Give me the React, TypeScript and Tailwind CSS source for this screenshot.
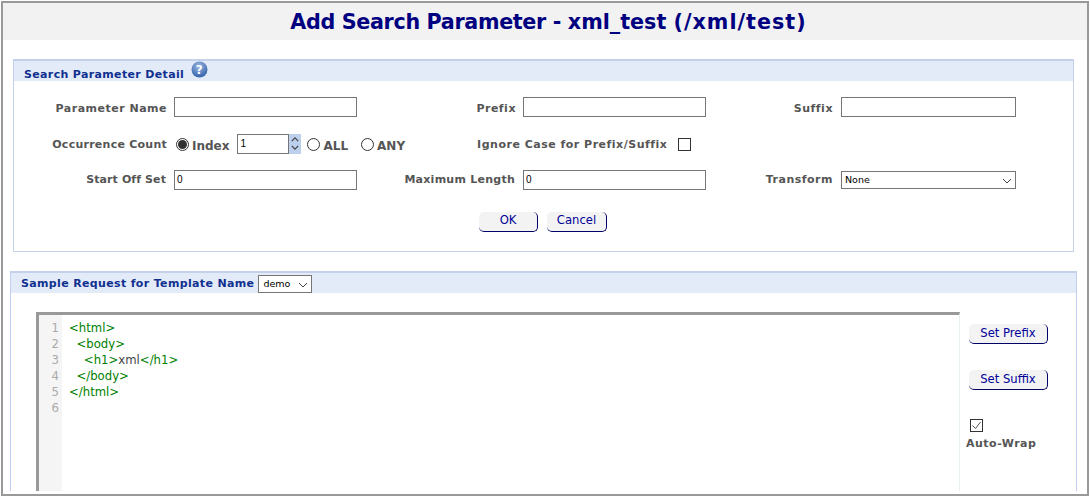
import React from "react";

const labelCls = "pt-[4px] text-right text-[11px] font-bold text-[#555555] whitespace-nowrap tracking-[0.5px]";
const inputCls = "h-5 border border-[#767676] bg-white px-[2px] text-[10px] text-black outline-none font-['Liberation_Sans',sans-serif]";

function Radio({ checked }: { checked?: boolean }) {
    return (
        <span className="mt-[2px] flex h-[13px] w-[13px] shrink-0 items-center justify-center rounded-full border border-[#333333] bg-white">
            {checked && <span className="h-[9px] w-[9px] rounded-full bg-[#333333]" />}
        </span>
    );
}

function Btn({ label, width }: { label: string; width: string }) {
    return (
        <button className={`${width} h-5 rounded-[5px] border-r border-b border-r-[#000066] border-b-[#000066] bg-[#f3f3f3] text-[11.6px] text-[#000099]`}>
            {label}
        </button>
    );
}

function HelpIcon() {
    return (
        <svg width="17" height="17" viewBox="0 0 17 17" className="ml-[7px] mt-[-4px]">
            <defs>
                <radialGradient id="help" cx="45%" cy="30%" r="75%">
                    <stop offset="0%" stopColor="#9db8e0" />
                    <stop offset="100%" stopColor="#2c5ca8" />
                </radialGradient>
            </defs>
            <circle cx="8.5" cy="8.5" r="8" fill="url(#help)" />
            <text x="8.5" y="13" textAnchor="middle" fontSize="12" fontWeight="700" fill="#ffffff">?</text>
        </svg>
    );
}

const codeLines = ["<html>", "  <body>", "    <h1>", "  </body>", "</html>", ""];

function Chevron({ className, weight = 1 }: { className: string; weight?: number }) {
    return (
        <svg width="10" height="6" viewBox="0 0 10 6" className={className}>
            <path d="M1 1l4 4 4-4" fill="none" stroke="#444444" strokeWidth={weight} />
        </svg>
    );
}

export default function App() {
    return (
        <div className="h-[497px] w-[1090px] overflow-hidden bg-white p-px font-['DejaVu_Sans',sans-serif]">
            <div className="h-[495px] w-[1088px] overflow-hidden border-2 border-[#999999]">
                <div className="flex h-[37px] items-center justify-center whitespace-pre bg-[#f2f2f2] pl-[7px] pt-[2px] text-[20.7px] font-bold text-[#000080]">
                    <span className="tracking-[-0.35px]">Add Search Parameter - </span>
                    <span>xml_test </span>
                    <span className="tracking-[1px]">(/xml/test)</span>
                </div>

                {/* Search Parameter Detail */}
                <div className="ml-[10px] mt-[19px] h-[193px] w-[1061px] border border-t-2 border-[#c3d2ea]">
                    <div className="flex h-[20px] items-center bg-[#e4ebf8] pl-[10px] text-[11px] font-bold tracking-[0.35px] text-[#103090]">
                        <span className="mt-[9px]">Search Parameter Detail</span>
                        <HelpIcon />
                    </div>

                    <div className="mt-[16px] flex items-center">
                        <span className={`${labelCls} w-[153px]`}>Parameter Name</span>
                        <input className={`${inputCls} ml-[7px] w-[183px]`} />
                        <span className={`${labelCls} w-[159px]`}>Prefix</span>
                        <input className={`${inputCls} ml-[7px] w-[183px]`} />
                        <span className={`${labelCls} w-[127px]`}>Suffix</span>
                        <input className={`${inputCls} ml-[8px] w-[175px]`} />
                    </div>

                    <div className="mt-[16px] flex h-5 items-center">
                        <span className={`${labelCls} w-[153px] !tracking-[0.25px]`}>Occurrence Count</span>
                        <span className="ml-[9px]"><Radio checked /></span>
                        <span className="ml-[3px] mt-[4px] text-[12px] font-bold text-[#555555]">Index</span>
                        <div className="ml-[8px] flex">
                            <input defaultValue="1" className={`${inputCls} w-[52px]`} />
                            <div className="flex h-5 w-[12px] flex-col items-center justify-center gap-[3px] bg-[#bcd0ee]">
                                <Chevron className="h-[5px] w-[8px] rotate-180" weight={1.6} />
                                <Chevron className="h-[5px] w-[8px]" weight={1.6} />
                            </div>
                        </div>
                        <span className="ml-[6px]"><Radio /></span>
                        <span className="ml-[3px] mt-[4px] text-[12px] font-bold text-[#555555]">ALL</span>
                        <span className="ml-[13px]"><Radio /></span>
                        <span className="ml-[3px] mt-[4px] text-[12px] font-bold text-[#555555]">ANY</span>
                        <span className={`${labelCls} ml-[72px]`}>Ignore Case for Prefix/Suffix</span>
                        <span className="ml-[11px] mt-[2px] h-[13px] w-[13px] border border-[#333333] bg-white" />
                    </div>

                    <div className="mt-[16px] flex items-center">
                        <span className={`${labelCls} w-[152px] !pt-[2px] !tracking-[0.1px]`}>Start Off Set</span>
                        <input defaultValue="0" className={`${inputCls} ml-[8px] w-[183px]`} />
                        <span className={`${labelCls} w-[158px] !pt-[2px] !tracking-[0.25px]`}>Maximum Length</span>
                        <input defaultValue="0" className={`${inputCls} ml-[8px] w-[183px]`} />
                        <span className={`${labelCls} w-[127px] !pt-[2px]`}>Transform</span>
                        <div className={`${inputCls} ml-[8px] flex !h-[18px] w-[175px] items-center justify-between pl-[3px]`}>
                            <span className="mt-[1px] text-[9.5px] font-['DejaVu_Sans',sans-serif]">None</span>
                            <Chevron className="mr-[1px] mt-[2px]" />
                        </div>
                    </div>

                    <div className="ml-[465px] mt-[22px] flex gap-[9px]">
                        <Btn label="OK" width="w-[59px]" />
                        <Btn label="Cancel" width="w-[60px]" />
                    </div>
                </div>

                {/* Sample Request */}
                <div className="ml-[7px] mt-[19px] h-[220px] w-[1067px] overflow-hidden border-x border-t-2 border-x-[#c3cff0] border-t-[#c3d2ea]">
                    <div className="flex h-[20px] items-center bg-[#e4ebf8] pl-[10px] text-[11px] font-bold tracking-[0.35px] text-[#103090]">
                        <span className="mt-[2px]">Sample Request for Template Name</span>
                        <div className="ml-[4px] mt-[2px] flex h-[18px] w-[54px] items-center justify-between border border-[#767676] bg-white pl-[4px] pr-[3px] text-[9.5px] font-normal tracking-normal text-black">
                            <span className="mt-[1px]">demo</span>
                            <Chevron className="mt-[2px]" />
                        </div>
                    </div>

                    <div className="ml-[25px] mt-[19px] flex">
                        <div className="flex h-[180px] w-[924px] border-l-[3px] border-t-[3px] border-r border-[#999999] border-r-[#e8f0f0] text-[11.7px] leading-[16px]">
                            <div className="w-[23px] bg-[#f5f5f5] pr-[3px] pt-[5px] text-right text-[#aaaaaa]">
                                {codeLines.map((_, i) => (
                                    <div key={i}>{i + 1}</div>
                                ))}
                            </div>
                            <div className="whitespace-pre pl-[7px] pt-[5px] text-[#008000]">
                                {codeLines.map((line, i) => (
                                    <div key={i} className="h-4">
                                        {line}
                                        {i === 2 && (
                                            <>
                                                <span className="text-[#444444]">xml</span>&lt;/h1&gt;
                                            </>
                                        )}
                                    </div>
                                ))}
                            </div>
                        </div>

                        <div className="ml-[5px] flex flex-col pt-[12px]">
                            <div className="ml-[4px] flex"><Btn label="Set Prefix" width="w-[79px]" /></div>
                            <div className="ml-[4px] mt-[26px] flex"><Btn label="Set Suffix" width="w-[79px]" /></div>
                            <span className="ml-[5px] mt-[29px] flex h-[13px] w-[13px] items-center justify-center border border-[#333333] bg-white">
                                <svg width="11" height="11" viewBox="0 0 11 11">
                                    <path d="M1.5 5.5l3 3 5-6.5" fill="none" stroke="#555555" strokeWidth="1" />
                                </svg>
                            </span>
                            <span className="ml-[1px] mt-[4px] text-[11px] font-bold tracking-[0.5px] text-[#555555]">Auto-Wrap</span>
                        </div>
                    </div>
                </div>
            </div>
        </div>
    );
}
